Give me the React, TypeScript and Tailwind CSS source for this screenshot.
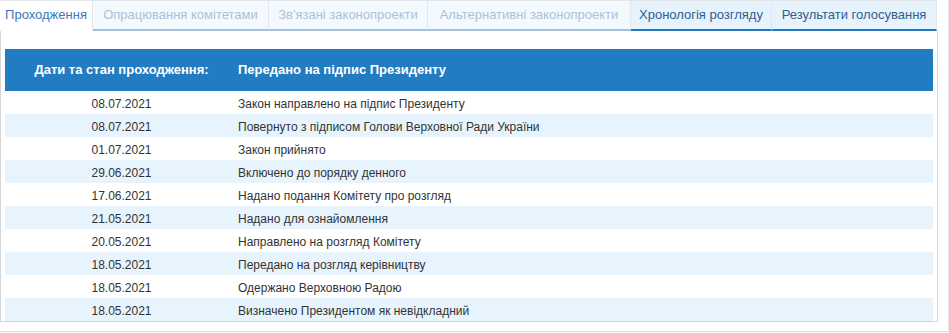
const rows: [string, string][] = [
  ["08.07.2021", "Закон направлено на підпис Президенту"],
  ["08.07.2021", "Повернуто з підписом Голови Верховної Ради України"],
  ["01.07.2021", "Закон прийнято"],
  ["29.06.2021", "Включено до порядку денного"],
  ["17.06.2021", "Надано подання Комітету про розгляд"],
  ["21.05.2021", "Надано для ознайомлення"],
  ["20.05.2021", "Направлено на розгляд Комітету"],
  ["18.05.2021", "Передано на розгляд керівництву"],
  ["18.05.2021", "Одержано Верховною Радою"],
  ["18.05.2021", "Визначено Президентом як невідкладний"],
];

type Tab = { label: string; width: string; state: "active" | "disabled" | "enabled" };

const tabs: Tab[] = [
  { label: "Проходження", width: "w-[93px]", state: "active" },
  { label: "Опрацювання комітетами", width: "w-[176px]", state: "disabled" },
  { label: "Зв'язані законопроекти", width: "w-[159px]", state: "disabled" },
  { label: "Альтернативні законопроекти", width: "w-[203px]", state: "disabled" },
  { label: "Хронологія розгляду", width: "w-[141px]", state: "enabled" },
  { label: "Результати голосування", width: "w-[165px]", state: "enabled" },
];

function TabButton({ tab }: { tab: Tab }) {
  const base = "h-[31px] shrink-0 border-t border-r border-[#e3e6e9] text-center text-[13px] leading-[27px]";
  if (tab.state === "active") {
    return <div className={`${base} ${tab.width} bg-white text-[#3a78b8]`}>{tab.label}</div>;
  }
  if (tab.state === "disabled") {
    return (
      <div className={`${base} ${tab.width} border-b-2 border-b-[#9fc0de] bg-[#f4f9fe] text-[#a9c2da]`}>
        {tab.label}
      </div>
    );
  }
  return (
    <div className={`${base} ${tab.width} border-b-2 border-b-[#2279c0] bg-[#e6f2fc] text-[#2d5f91]`}>
      {tab.label}
    </div>
  );
}

export default function App() {
  return (
    <div className="h-[333px] w-[949px] overflow-hidden bg-white font-['Liberation_Sans',Arial,sans-serif]">
      <div className="h-[332px] border-b border-[#dcdcdc] border-r border-r-[#e6e6e6]">
        <div className="w-[938px]">
          <div className="flex">
            {tabs.map((t) => (
              <TabButton key={t.label} tab={t} />
            ))}
          </div>
          <div className="border-l border-r border-b border-[#d6d6d6] px-[4px] pt-[18px]">
            <div className="flex h-[42px] items-center bg-[#217cc2] text-[13px] font-bold text-white">
              <div className="w-[233px] text-center">Дати та стан проходження:</div>
              <div>Передано на підпис Президенту</div>
            </div>
            {rows.map(([date, text], i) => (
              <div
                key={i}
                className={`flex h-[23px] items-center pt-[3px] text-[12px] text-[#333] ${i % 2 === 1 ? "bg-[#e7f3fd]" : "bg-white"}`}
              >
                <div className="w-[233px] text-center">{date}</div>
                <div>{text}</div>
              </div>
            ))}
          </div>
        </div>
      </div>
    </div>
  );
}
